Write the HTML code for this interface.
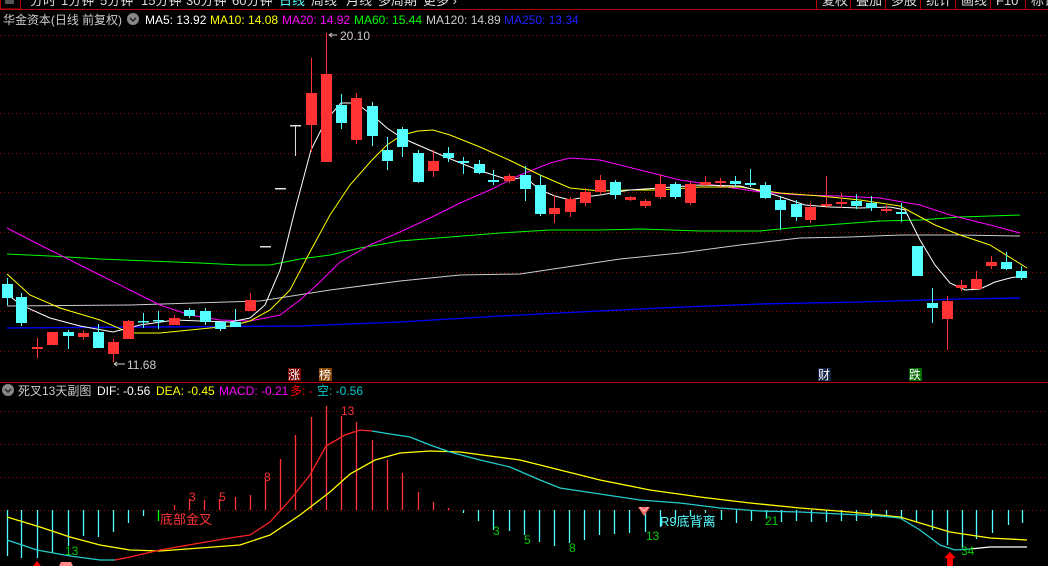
<!DOCTYPE html>
<html><head><meta charset="utf-8"><style>
html,body{margin:0;padding:0;background:#000;width:1048px;height:566px;overflow:hidden;font-family:"Liberation Sans","Noto Sans CJK SC",sans-serif;}
</style></head><body>
<svg id="s" width="1048" height="566" style="position:absolute;left:0;top:0" xmlns="http://www.w3.org/2000/svg">
<g font-family="Liberation Sans, Noto Sans CJK SC, sans-serif">
<line x1="0" y1="9.5" x2="1048" y2="9.5" stroke="#b00" />
<rect x="0.5" y="-2" width="20" height="11" fill="none" stroke="#b00"/>
<rect x="5" y="0" width="9" height="4" fill="#555"/>
<text y="5" font-size="13" fill="#ddd"><tspan x="30">分时</tspan><tspan x="61">1分钟</tspan><tspan x="100">5分钟</tspan><tspan x="141">15分钟</tspan><tspan x="186">30分钟</tspan><tspan x="232">60分钟</tspan><tspan x="279" fill="#5ff">日线</tspan><tspan x="311">周线</tspan><tspan x="346">月线</tspan><tspan x="378">多周期</tspan><tspan x="423">更多 ›</tspan></text>
<g stroke="#b00"><line x1="816.5" y1="0" x2="816.5" y2="9"/><line x1="850.5" y1="0" x2="850.5" y2="9"/><line x1="885.5" y1="0" x2="885.5" y2="9"/><line x1="920.5" y1="0" x2="920.5" y2="9"/><line x1="955.5" y1="0" x2="955.5" y2="9"/><line x1="990.5" y1="0" x2="990.5" y2="9"/><line x1="1025.5" y1="0" x2="1025.5" y2="9"/></g>
<text y="5" font-size="13" fill="#ddd"><tspan x="822">复权</tspan><tspan x="856">叠加</tspan><tspan x="891">多股</tspan><tspan x="926">统计</tspan><tspan x="961">画线</tspan><tspan x="996">F10</tspan><tspan x="1031">标记</tspan></text>
<text x="3" y="24" font-size="12" fill="#ccc" textLength="119">华金资本(日线 前复权)</text>
<circle cx="133" cy="19" r="6" fill="#888"/><path d="M130 18l3 3 3-3" stroke="#222" stroke-width="1.5" fill="none"/>
<text y="24" font-size="12"><tspan fill="#fff" x="145">MA5: 13.92</tspan><tspan fill="#ff0" x="210">MA10: 14.08</tspan><tspan fill="#f0f" x="282">MA20: 14.92</tspan><tspan fill="#0f0" x="354">MA60: 15.44</tspan><tspan fill="#ccc" x="426">MA120: 14.89</tspan><tspan fill="#22f" x="504">MA250: 13.34</tspan></text>
<g id="grid" stroke="#900" stroke-dasharray="1,3"></g>
<g id="ma" fill="none"></g>
<g id="cd"></g>
<text x="340" y="40" font-size="12" fill="#ccc">20.10</text><path d="M329 35h8M329 35l3-2M329 35l3 2" stroke="#ccc" fill="none"/>
<text x="127" y="369" font-size="12" fill="#ccc">11.68</text><path d="M114 364h11M114 364l3-2M114 364l3 2" stroke="#ccc" fill="none"/>
<rect x="288" y="368" width="13" height="13" fill="#700"/><text x="288" y="379" font-size="12" fill="#fff">涨</text>
<rect x="319" y="368" width="13" height="13" fill="#840"/><text x="319" y="379" font-size="12" fill="#fff">榜</text>
<rect x="818" y="368" width="13" height="13" fill="#124"/><text x="818" y="379" font-size="12" fill="#fff">财</text>
<rect x="909" y="368" width="13" height="13" fill="#060"/><text x="909" y="379" font-size="12" fill="#fff">跌</text>
<line x1="0" y1="382.5" x2="1048" y2="382.5" stroke="#b00"/>
<circle cx="8" cy="390" r="6" fill="#888"/><path d="M5 389l3 3 3-3" stroke="#222" stroke-width="1.5" fill="none"/>
<text x="18" y="395" font-size="12"><tspan fill="#ccc">死叉13天副图</tspan><tspan fill="#fff" x="97">DIF: -0.56</tspan><tspan fill="#ff0" x="156">DEA: -0.45</tspan><tspan fill="#f0f" x="219">MACD: -0.21</tspan><tspan fill="#f00" x="290">多: -</tspan><tspan fill="#0cc" x="317">空: -0.56</tspan></text>
<g id="mg" stroke="#900" stroke-dasharray="1,3"></g>
<g id="hist" stroke-width="1.3"></g>
<g id="ml" fill="none" stroke-width="1.3"></g>
<g font-size="12">
<text x="65" y="555" fill="#0c0">13</text>
<text x="189" y="501" fill="#f33">3</text><text x="219" y="501" fill="#f33">5</text><text x="264" y="481" fill="#f33">8</text><text x="341" y="415" fill="#f33">13</text>
<text x="160" y="524" fill="#f33" font-size="13">底部金叉</text>
<text x="493" y="535" fill="#0c0">3</text><text x="524" y="544" fill="#0c0">5</text><text x="569" y="552" fill="#0c0">8</text><text x="646" y="540" fill="#0c0">13</text>
<text x="660" y="526" fill="#5ff" font-size="13">R9底背离</text>
<text x="765" y="525" fill="#0c0">21</text><text x="961" y="555" fill="#0c0">34</text>
</g>
<path d="M638 507h12l-6 9z" fill="#f66"/><path d="M640 507l4 4 4-4" stroke="#fcc" fill="none"/>
<path d="M59 566l2-4h10l2 4z" fill="#f88"/>
<path d="M33 566l4-5 4 5z" fill="#f00"/>
<path d="M947 566v-8h-3l6-6 6 6h-3v8z" fill="#f00"/>
</g></svg>
<script>
var N="http://www.w3.org/2000/svg";
function el(p,t,a){var e=document.createElementNS(N,t);for(var k in a)e.setAttribute(k,a[k]);document.getElementById(p).appendChild(e);return e;}
[35,74,113,153,192,232,272,311,351].forEach(function(y){el("grid","line",{x1:0,x2:1048,y1:y+.5,y2:y+.5});});
[411,444,477,510].forEach(function(y){el("mg","line",{x1:0,x2:1048,y1:y+.5,y2:y+.5});});
function pl(p,c,pts,w){el(p,"polyline",{points:pts,stroke:c,"stroke-width":w||1});}
pl("ma","#ccc","7,306 130,305 260,301 330,290 400,281 460,275 520,274 560,268 620,259 680,253 740,245 800,238 850,237 900,235 960,235 1020,236");
pl("ma","#00f","7,328 300,326 400,322 500,316 560,313 660,308 760,304 860,302 960,299 1020,298",1.3);
pl("ma","#0f0","7,254 50,256 100,259 150,261 200,263 240,265 270,265 300,259 330,255 360,248 400,241 450,237 500,233 550,230 600,230 640,229 700,231 760,231 800,227 840,224 880,221 920,220 960,217 1020,215");
pl("ma","#f0f","7,228 40,245 70,260 100,275 130,290 160,305 190,315 220,320 250,321 280,315 300,300 320,282 340,262 370,245 400,232 430,218 460,203 490,190 520,175 550,163 570,158 600,160 640,170 680,180 720,186 760,192 800,195 840,196 880,198 920,205 950,215 990,225 1020,233");
pl("ma","#ff0","7,274 30,295 60,308 100,320 130,333 160,333 200,329 230,326 250,321 270,310 290,290 311,250 330,215 350,185 372,160 387,145 402,135 418,131 433,130 450,135 480,147 509,160 540,175 570,188 600,191 630,190 660,190 700,187 740,187 780,193 820,196 860,200 900,206 935,225 960,235 990,245 1027,268");
pl("ma","#fff","7,294 21,305 50,318 80,326 113,332 140,325 175,320 200,321 230,322 250,318 265,305 280,270 295,210 311,150 326,120 341,103 356,103 372,115 387,128 402,138 418,145 448,158 478,170 509,180 525,177 540,190 555,196 570,200 585,197 600,195 630,190 660,188 700,185 740,186 775,195 805,205 830,207 860,208 890,207 905,210 920,240 935,265 950,283 965,290 980,289 995,282 1010,278 1027,275");
var R="#ff3333",C="#54ffff",W="#ddd";
var c=[[7,284,298,278,305,C],[21,297,323,293,326,C],[37,347,349,338,358,R],[52,332,345,332,345,R],[68,332,336,330,349,C],[83,333,337,330,340,R],[98,332,348,324,348,C],[113,342,354,339,362,R],[128,321,339,320,339,R],[143,321,322,313,328,C],[158,320,321,311,329,C],[174,318,325,315,325,R],[189,310,316,308,318,C],[205,311,322,308,325,C],[220,322,329,322,331,C],[235,322,327,309,327,C],[250,300,311,293,311,R],[265,246,247,246,247,W],[280,188,189,188,189,W],[295,125,126,125,156,W],[311,93,125,58,152,R],[326,74,162,33,162,R],[341,105,123,94,129,C],[356,98,140,93,144,R],[372,106,136,102,146,C],[387,150,161,137,170,C],[402,129,147,127,157,C],[418,153,182,150,183,C],[433,161,171,150,177,R],[448,153,158,147,162,C],[463,161,163,157,174,C],[479,164,173,160,174,C],[493,180,182,170,185,C],[509,176,181,174,183,R],[525,175,189,166,201,C],[540,185,214,175,216,C],[554,208,214,195,223,R],[570,199,212,197,217,R],[585,192,203,188,206,R],[600,180,192,175,194,R],[615,182,195,180,199,C],[630,197,200,196,201,R],[645,201,206,199,208,R],[660,184,197,174,199,R],[675,184,197,182,199,C],[690,184,203,182,205,R],[705,182,185,176,187,R],[720,181,183,178,186,R],[735,181,184,176,187,C],[750,183,185,169,187,C],[765,185,198,182,199,C],[780,200,210,196,230,C],[796,204,217,200,221,C],[810,207,220,203,223,R],[826,204,206,176,208,R],[841,202,204,193,208,R],[856,201,206,194,209,C],[871,203,208,196,211,C],[886,209,211,205,213,R],[901,212,214,203,222,C],[917,246,276,246,276,C],[932,303,308,288,323,C],[947,301,319,296,350,R],[961,285,288,280,291,R],[976,279,289,271,289,R],[991,262,266,256,269,R],[1006,262,269,252,270,C],[1021,271,278,266,280,C]];
c.forEach(function(d){var x=d[0];el("cd","line",{x1:x+.5,x2:x+.5,y1:d[3],y2:d[4],stroke:d[5]});var h=Math.max(d[2]-d[1],1.5);el("cd","rect",{x:x-5,y:d[1],width:11,height:h,fill:d[5]});});
var hb=[[7,556,C],[21,558,C],[37,558,C],[52,553,C],[68,546,C],[83,536,C],[98,537,C],[113,532,C],[128,523,C],[143,516,C],[158,521,"#0f0"],[174,505,R],[189,499,R],[204,500,R],[219,499,R],[235,497,R],[250,495,R],[265,480,R],[280,459,R],[295,435,R],[311,417,R],[326,406,R],[341,416,R],[356,422,R],[372,440,R],[387,460,R],[402,473,R],[418,492,R],[433,502,R],[448,508,R],[463,513,C],[478,521,C],[493,530,C],[509,531,C],[524,535,C],[539,542,C],[554,546,C],[569,543,C],[584,540,C],[599,535,C],[614,534,C],[629,533,C],[645,532,C],[660,527,C],[675,520,C],[690,516,C],[705,513,C],[721,520,C],[736,523,C],[751,521,C],[766,519,C],[781,522,C],[796,521,C],[811,522,C],[826,522,C],[841,521,C],[856,521,C],[871,518,C],[886,517,C],[901,519,C],[916,522,C],[932,530,C],[947,545,C],[962,548,C],[976,539,C],[992,533,C],[1008,525,C],[1022,523,C]];
hb.forEach(function(d){el("hist","line",{x1:d[0]+.5,x2:d[0]+.5,y1:510,y2:d[1],stroke:d[2]});});
pl("ml","#ff0","7,517 40,527 70,537 100,545 130,550 160,551 200,548 240,545 270,535 300,515 330,492 350,474 375,460 400,453 430,451 460,452 490,456 520,460 560,470 600,480 650,490 700,497 750,503 800,508 850,512 900,517 950,532 990,538 1027,540",1.3);
pl("ml","#2cc","7,540 37,550 70,556 100,560 115,560",1.3);
pl("ml","#ff2222","115,560 130,557 160,550 200,543 230,538 250,535 270,522 290,500 310,475 326,446 345,435 360,430 372,431",1.3);
pl("ml","#2cc","372,431 390,434 410,437 430,445 450,452 480,460 510,467 540,480 560,488 600,494 640,500 680,503 720,508 760,511 800,512 840,514 880,516 900,518 920,530 940,545 955,550 970,549",1.3);
pl("ml","#fff","970,549 990,547 1027,547",1.3);
</script>
</body></html>
